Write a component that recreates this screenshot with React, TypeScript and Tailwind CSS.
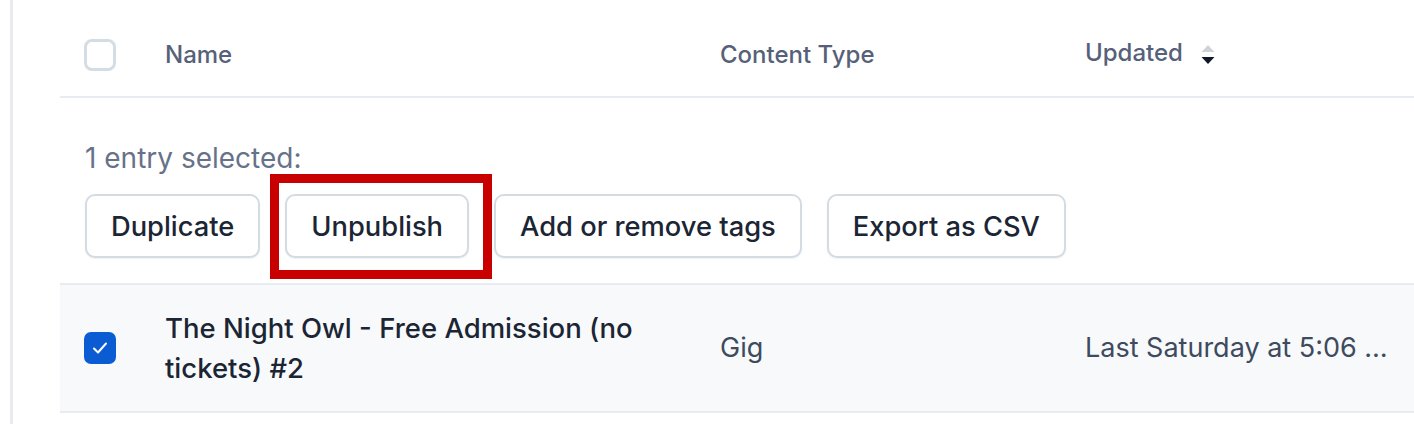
import React from 'react';

const font = { fontFamily: 'Inter, "Noto Sans", sans-serif' };

const actions = ['Duplicate', 'Unpublish', 'Add or remove tags', 'Export as CSV'];

function SortIcon() {
  return (
    <svg width="14" height="22" viewBox="0 0 14 22" className="ml-[18px]">
      <path d="M7 1 L13.5 8 L0.5 8 Z" fill="#cfd3d8" />
      <path d="M0.5 13 L13.5 13 L7 20 Z" fill="#111827" />
    </svg>
  );
}

export default function App() {
  return (
    <div className="h-[424px] w-[1414px] overflow-hidden bg-white" style={font}>
      <div className="ml-[10px] flex h-full border-l-[3px] border-[#e8eaed] pl-[47px]">
        <div className="flex-1">
          {/* header */}
          <div className="flex h-[98px] items-center border-b-2 border-[#e8ebef] pt-[14px]">
            <div className="w-[105px] pl-[24px]">
              <div className="h-[32px] w-[32px] rounded-[8px] border-[3px] border-[#d5dde4] bg-white" />
            </div>
            <div className="w-[555px] text-[24px] font-medium text-[#566179]">Name</div>
            <div className="w-[365px] text-[24px] font-medium text-[#566179]">Content Type</div>
            <div className="flex items-center text-[24px] font-medium text-[#566179]">
              <span className="-mt-[4px]">Updated</span>
              <SortIcon />
            </div>
          </div>

          {/* bulk actions */}
          <div className="h-[185px] pl-[25px] pt-[43px]">
            <div className="text-[28px] leading-[34px] text-[#67728a]">1 entry selected:</div>
            <div className="mt-[19px] flex gap-[25px]">
              {actions.map((label) => (
                <div key={label} className="relative">
                  <button className="h-[64px] rounded-[10px] border-2 border-[#d3dce3] bg-white px-[24px] pt-[3px] text-[27.3px] font-medium text-[#1b2534] shadow-[0_1px_2px_rgba(0,0,0,0.06)]">
                    {label}
                  </button>
                  {label === 'Unpublish' && (
                    <div className="pointer-events-none absolute -top-[20px] -bottom-[21px] -left-[15px] -right-[23px] border-[9px] border-[#c80000]" />
                  )}
                </div>
              ))}
            </div>
          </div>

          {/* row */}
          <div className="flex h-[130px] items-center border-y-2 border-[#e8ebef] bg-[#f7f9fa]">
            <div className="w-[105px] pl-[24px]">
              <div className="flex h-[32px] w-[32px] items-center justify-center rounded-[7px] bg-[#0b5bd3]">
                <svg width="20" height="20" viewBox="0 0 20 20" fill="none">
                  <path d="M4 10.5 L8 14.5 L16 5.5" stroke="white" strokeWidth="2" strokeLinecap="round" strokeLinejoin="round" />
                </svg>
              </div>
            </div>
            <div className="w-[555px] pr-[60px] text-[27.5px] font-medium leading-[40px] text-[#1b2534]">
              The Night Owl - Free Admission (no tickets) #2
            </div>
            <div className="w-[365px] text-[27px] text-[#3e4a5e]">Gig</div>
            <div className="w-[305px] truncate text-[27px] text-[#3e4a5e]">Last Saturday at 5:06 PM</div>
          </div>
        </div>
      </div>
    </div>
  );
}
